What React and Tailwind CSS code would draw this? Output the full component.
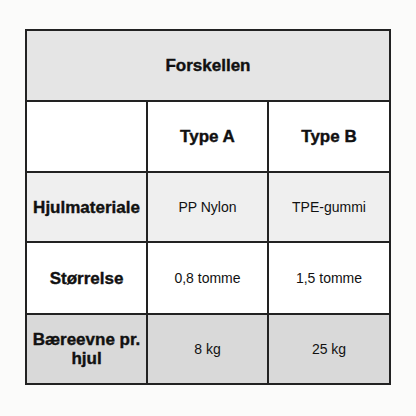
import React from "react"

const rows = [
  { label: "Hjulmateriale", a: "PP Nylon", b: "TPE-gummi", bg: "bg-[#efefef]", h: "h-[70px]" },
  { label: "Størrelse", a: "0,8 tomme", b: "1,5 tomme", bg: "bg-white", h: "h-[72px]" },
  { label: "Bæreevne pr. hjul", a: "8 kg", b: "25 kg", bg: "bg-[#d9d9d9]", h: "h-[70px]" },
]

const bold = "text-[17px] font-bold [-webkit-text-stroke:0.4px_#111]"

function App() {
  return (
    <div
      className="w-[416px] h-[416px] bg-[#fbfbfa] pt-[29px] pl-[25px] font-['Liberation_Sans',Arial,sans-serif]"
    >
      <table className="table-fixed border-collapse w-[366px] text-center text-[#111]">
        <colgroup>
          <col className="w-[121px]" />
          <col className="w-[121px]" />
          <col />
        </colgroup>
        <tbody>
          <tr className="h-[71px] bg-[#e5e5e5]">
            <td colSpan={3} className={"border-2 border-[#222] " + bold}>
              Forskellen
            </td>
          </tr>
          <tr className="h-[71px] bg-white">
            <td className="border-2 border-[#222]"></td>
            <td className={"border-2 border-[#222] " + bold}>Type A</td>
            <td className={"border-2 border-[#222] " + bold}>Type B</td>
          </tr>
          {rows.map((r) => (
            <tr key={r.label} className={r.h + " " + r.bg}>
              <td className={"border-2 border-[#222] leading-[19px] " + bold}>
                {r.label}
              </td>
              <td className="border-2 border-[#222] text-[14px]">{r.a}</td>
              <td className="border-2 border-[#222] text-[14px]">{r.b}</td>
            </tr>
          ))}
        </tbody>
      </table>
    </div>
  )
}

export default App
